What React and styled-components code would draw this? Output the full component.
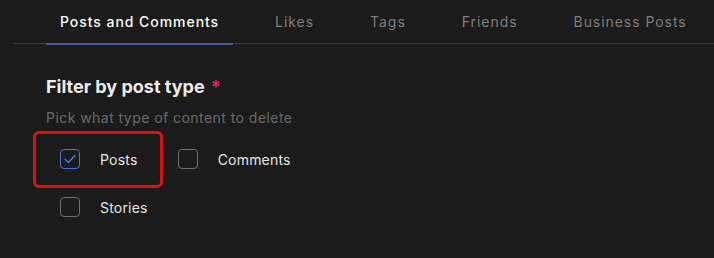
import React, { useState } from "react";
import styled, { createGlobalStyle } from "styled-components";

const Global = createGlobalStyle`
  html, body { margin: 0; padding: 0; background: #1b1b1b; }
  body { font-family: Inter, "Noto Sans", sans-serif; -webkit-font-smoothing: antialiased; }
`;

const Page = styled.div`
  width: 714px;
  height: 258px;
  background: #1b1b1b;
  overflow: hidden;
  box-sizing: border-box;
`;

const TabBar = styled.div`
  display: flex;
  gap: 28px;
  margin-left: 14px;
  padding-left: 32px;
  border-bottom: 1px solid #3c3c3c;
  height: 43px;
`;

const Tab = styled.div`
  position: relative;
  padding: 0 14px;
  display: flex;
  align-items: center;
  font-size: 14px;
  letter-spacing: 0.95px;
  font-weight: ${(p) => (p.$active ? 500 : 400)};
  color: ${(p) => (p.$active ? "#ffffff" : "#7e7e7e")};
  white-space: nowrap;
  &::after {
    content: "";
    display: ${(p) => (p.$active ? "block" : "none")};
    position: absolute;
    left: 0;
    right: 0;
    bottom: -2px;
    height: 2px;
    background: #3f5b9b;
  }
`;

const Section = styled.div`
  padding: 32px 0 0 46px;
`;

const Heading = styled.div`
  font-size: 18px;
  line-height: 22px;
  font-weight: 700;
  color: #ececec;
  letter-spacing: 0;
`;

const Required = styled.span`
  color: #e0245e;
  margin-left: 6px;
`;

const Hint = styled.div`
  margin-top: 10px;
  font-size: 14px;
  line-height: 20px;
  color: #6a6a6a;
  letter-spacing: 0.45px;
`;

const Options = styled.div`
  display: grid;
  grid-template-columns: auto auto;
  justify-content: start;
  row-gap: 28px;
  column-gap: 30px;
  margin-top: 21px;
  padding-left: 14px;
`;

const Option = styled.label`
  position: relative;
  display: flex;
  align-items: center;
  gap: 20px;
  font-size: 14px;
  color: #e6e6e6;
  letter-spacing: 0.2px;
  cursor: pointer;
  height: 20px;
`;

const Box = styled.span`
  width: 20px;
  height: 20px;
  box-sizing: border-box;
  border-radius: 4px;
  border: 1px solid ${(p) => (p.$checked ? "#4a74d6" : "#6f6f6f")};
  display: flex;
  align-items: center;
  justify-content: center;
`;

const Highlight = styled.div`
  position: absolute;
  left: -27px;
  top: -18px;
  width: 130px;
  height: 57px;
  box-sizing: border-box;
  border: 3px solid #e01010;
  border-radius: 6px;
  pointer-events: none;
`;

function Check({ label, checked, onToggle, children }) {
  return (
    <Option onClick={onToggle}>
      <Box $checked={checked}>
        {checked && (
          <svg width="12" height="10" viewBox="0 0 12 10" fill="none">
            <path d="M1 5.2 L4.3 8.5 L11 1.5" stroke="#5a86e8" strokeWidth="1.1" strokeLinecap="round" strokeLinejoin="round" />
          </svg>
        )}
      </Box>
      {label}
      {children}
    </Option>
  );
}

export default function App() {
  const [checked, setChecked] = useState({ posts: true, comments: false, stories: false });
  const toggle = (k) => () => setChecked((c) => ({ ...c, [k]: !c[k] }));
  const tabs = ["Posts and Comments", "Likes", "Tags", "Friends", "Business Posts"];
  return (
    <Page>
      <Global />
      <TabBar>
        {tabs.map((t, i) => (
          <Tab key={t} $active={i === 0}>{t}</Tab>
        ))}
      </TabBar>
      <Section>
        <Heading>
          Filter by post type<Required>*</Required>
        </Heading>
        <Hint>Pick what type of content to delete</Hint>
        <Options>
          <Check label="Posts" checked={checked.posts} onToggle={toggle("posts")}>
            <Highlight />
          </Check>
          <Check label="Comments" checked={checked.comments} onToggle={toggle("comments")} />
          <Check label="Stories" checked={checked.stories} onToggle={toggle("stories")} />
        </Options>
      </Section>
    </Page>
  );
}
